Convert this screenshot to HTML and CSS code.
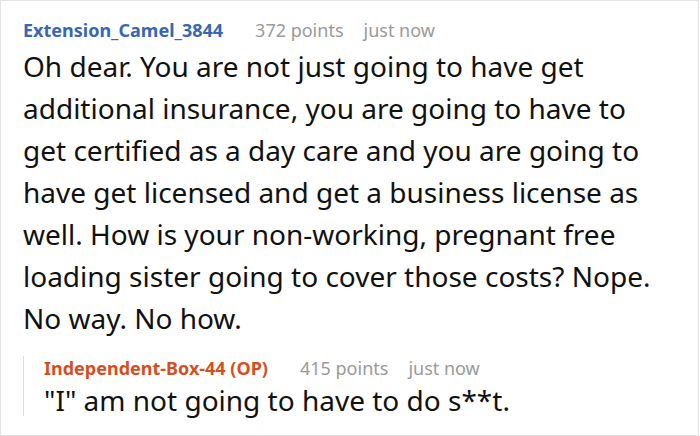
FILE: index.html
```html
<!DOCTYPE html>
<html lang="en">
<head>
<meta charset="utf-8">
<title>Comment</title>
<link rel="stylesheet" href="styles.css">
</head>
<body>
<div class="comment">
  <div class="meta">
    <span class="author">Extension_Camel_3844</span>
    <span class="info">372 points</span>
    <span class="info">just now</span>
  </div>
  <p class="body">Oh dear. You are not just going to have get<br>
additional insurance, you are going to have to<br>
get certified as a day care and you are going to<br>
have get licensed and get a business license as<br>
well. How is your non-working, pregnant free<br>
loading sister going to cover those costs? Nope.<br>
No way. No how.</p>
  <div class="reply">
    <div class="meta">
      <span class="author op">Independent-Box-44 (OP)</span>
      <span class="info">415 points</span>
      <span class="info">just now</span>
    </div>
    <p class="body reply-body">"I" am not going to have to do s**t.</p>
  </div>
</div>
</body>
</html>
```

FILE: styles.css
```css
html, body {
  margin: 0;
  padding: 0;
  background: #ffffff;
}
.comment {
  box-sizing: border-box;
  width: 699px;
  height: 436px;
  border: 1px solid #e3e3e3;
  padding: 17px 22px 0 22px;
  font-family: "Noto Sans", sans-serif;
  color: #111111;
  overflow: hidden;
}
.meta {
  display: flex;
  gap: 20px;
  font-size: 18px;
  line-height: 24px;
  white-space: nowrap;
}
.author {
  font-weight: 700;
  color: #3766b4;
  margin-right: 12px;
}
.author.op {
  color: #d4501f;
}
.info {
  color: #9a9a9a;
}
.body {
  margin: 3px 0 0 0;
  font-size: 28px;
  line-height: 42px;
  white-space: nowrap;
}
.reply {
  margin-top: 17px;
  border-left: 1px solid #dddddd;
  padding-left: 20px;
  height: 60px;
}
.reply-body {
  margin-top: 0;
  line-height: 40px;
}
```
